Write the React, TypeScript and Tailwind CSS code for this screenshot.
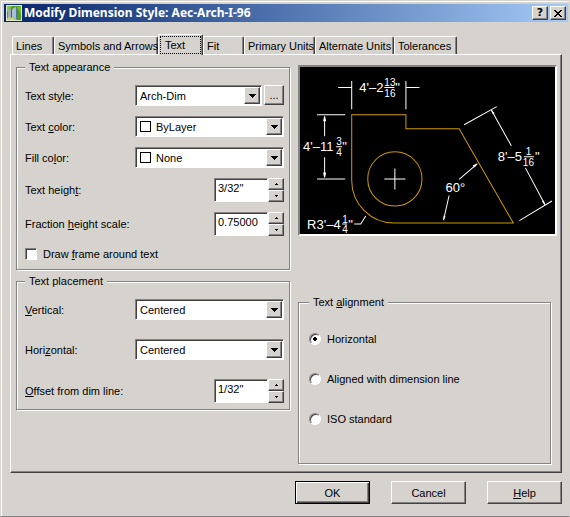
import { useState } from "react";
import type { ReactNode } from "react";

const tabs = [
  { name: "Lines", width: "w-[42px]" },
  { name: "Symbols and Arrows", width: "w-[104px]" },
  { name: "Text", width: "w-[45px]" },
  { name: "Fit", width: "w-[41px]" },
  { name: "Primary Units", width: "w-[71px]" },
  { name: "Alternate Units", width: "w-[79px]" },
  { name: "Tolerances", width: "w-[63px]" }
];

const raised = "bg-[#d6d3ce] border border-t-white border-l-white border-r-[#424142] border-b-[#424142] shadow-[inset_-1px_-1px_0_#848284]";
const sunken = "bg-white border border-t-[#848284] border-l-[#848284] border-r-white border-b-white shadow-[inset_1px_1px_0_#424142]";

const Group = ({ title, className, children }: { title: ReactNode; className: string; children: ReactNode }) => (
  <fieldset className={`border border-[#848284] shadow-[1px_1px_0_#fff,inset_1px_1px_0_#fff] ${className}`}>
    <legend className="bg-[#d6d3ce] px-1 leading-4">{title}</legend>
    {children}
  </fieldset>
);

const Row = ({ id, label, children }: { id: string; label: ReactNode; children: ReactNode }) => (
  <div className="flex items-center justify-between">
    <label htmlFor={id}>{label}</label>
    {children}
  </div>
);

const Combo = ({ id, options, swatch, className }: { id: string; options: string[]; swatch?: boolean; className: string }) => (
  <div className={`relative h-[21px] ${className}`}>
    <select id={id} className={`size-full appearance-none rounded-none outline-none pr-5 ${swatch ? "pl-5" : "pl-1"} ${sunken}`}>
      {options.map((option) => (
        <option key={option}>{option}</option>
      ))}
    </select>
    {swatch && <span className="pointer-events-none absolute left-[5px] top-[5px] size-[11px] border border-black bg-white" />}
    <span className={`pointer-events-none absolute right-[2px] top-[2px] flex h-[17px] w-4 items-center justify-center ${raised}`}>
      <svg width="7" height="4" viewBox="0 0 7 4" shapeRendering="crispEdges">
        <path d="M0 0h7v1h-1v1h-1v1h-1v1h-1v-1h-1v-1h-1v-1h-1z" />
      </svg>
    </span>
  </div>
);

const Spinner = ({ id, initial }: { id: string; initial: string }) => (
  <div className="flex h-6">
    <input id={id} type="text" defaultValue={initial} className={`w-[54px] px-[3px] pb-1 outline-none ${sunken}`} />
    <div className="flex w-4 flex-col">
      <button type="button" aria-label="Increase" className={`flex flex-1 items-center justify-center ${raised}`}>
        <svg width="3" height="2" viewBox="0 0 3 2" shapeRendering="crispEdges"><path d="M1 0h1v1h1v1h-3v-1h1z" /></svg>
      </button>
      <button type="button" aria-label="Decrease" className={`flex flex-1 items-center justify-center ${raised}`}>
        <svg width="3" height="2" viewBox="0 0 3 2" shapeRendering="crispEdges"><path d="M0 0h3v1h-1v1h-1v-1h-1z" /></svg>
      </button>
    </div>
  </div>
);

const AppIcon = () => (
  <svg width="16" height="16" viewBox="0 0 16 16">
    <rect width="16" height="16" fill="#dfe8d4" />
    <rect x="1" y="1" width="14" height="14" fill="#4fa01c" />
    <path d="M1 1h5l-5 6z" fill="#8cc63c" />
    <path d="M11 2l4-1v8z" fill="#79bd2c" />
    <path d="M1 14l2-4 8 5h-10z" fill="#c8d27a" />
    <path d="M2 5l3-2v10l-3-1z" fill="#9fb0a8" />
    <path d="M6 4l4-2v12l-4-2z" fill="#a8c0d6" />
    <path d="M10 2l2 3v9l-2 0z" fill="#5a7896" />
    <path d="M5 3l1 1v8l-1 1z" fill="#4a6458" />
  </svg>
);

const Preview = () => (
  <svg viewBox="0 0 254 166" className="block h-auto w-full bg-black" role="img" aria-label="Dimension preview">
    <g fill="none" stroke="#ce9a00">
      <path d="M51.5 113.5v-66h54v14h53l54 94h-118.5a42.5 42.5 0 0 1 -42.5 -42.5z" />
      <circle cx="94.5" cy="111.5" r="27" />
    </g>
    <g fill="none" stroke="#fff">
      <path d="M84 111.5h21M94.5 101v21" />
      <path d="M51.5 14v28M105.5 14v28M38 20.5h13M106 20.5h13" />
      <path d="M17 47.5h28M17 111.5h28M24.5 51v18M24.5 90v18" />
      <path d="M163.5 57.5l32.5-18M190.5 42.5l20 36M224.5 100.5l19.5 36.5M218.5 153l32.5-19.5" />
      <path d="M158.5 112l18-15.5M148.5 128l-5.5 24.5M54 156.5h6.5l5-8" />
      <path d="M84 20.5h10M36 79.5h6M223 89.5h10M42 156.5h5" />
    </g>
    <g fill="#fff">
      <path d="M24 49h1l1 5h-3zM24 110h1l1-5h-3zM190 42l4 4-2 1zM244 138l-1-5-2 1zM177 96l-5 2 2 2zM143 153l0-5 2 1z" />
      <g className="font-['Liberation_Sans'] text-[13px]">
        <text x="59" y="25">4'–2</text>
        <text x="3" y="84">4'–11</text>
        <text x="197" y="94">8'–5</text>
        <text x="145" y="125">60°</text>
        <text x="7" y="161">R3'–4</text>
        <text x="95" y="25">"</text>
        <text x="42" y="84">"</text>
        <text x="234" y="94">"</text>
        <text x="48" y="161">"</text>
      </g>
      <g className="font-['Liberation_Sans'] text-[10px]">
        <text x="84" y="19">13</text>
        <text x="84" y="30">16</text>
        <text x="36" y="78">3</text>
        <text x="36" y="89">4</text>
        <text x="225" y="88">1</text>
        <text x="222" y="99">16</text>
        <text x="42" y="155">1</text>
        <text x="42" y="165">4</text>
      </g>
    </g>
  </svg>
);

const alignments = ["Horizontal", "Aligned with dimension line", "ISO standard"];

export default function App() {
  const [activeTab, setActiveTab] = useState("Text");
  const [alignment, setAlignment] = useState("Horizontal");

  return (
    <main className="flex min-h-screen flex-col border border-[#d6d3ce] border-b-[#848284] bg-[#d6d3ce] font-['Liberation_Sans',sans-serif] text-[11px] leading-4 text-black shadow-[inset_1px_1px_0_#fff]">
      <header className="ml-[3px] mr-px mt-[3px] flex h-[18px] items-center gap-0.5 bg-linear-to-r from-[#08246b] to-[#a5cbf7] px-0.5">
        <AppIcon />
        <h1 className="flex-1 font-['Noto_Sans',sans-serif] text-[12px] font-bold text-white">Modify Dimension Style: Aec-Arch-I-96</h1>
        <button type="button" aria-label="Help" className={`flex h-[14px] w-4 items-center justify-center font-['DejaVu_Sans'] text-[11px] font-bold ${raised}`}>?</button>
        <button type="button" aria-label="Close" className={`flex h-[14px] w-4 items-center justify-center ${raised}`}>
          <svg width="8" height="7" viewBox="0 0 8 7" shapeRendering="crispEdges">
            <path d="M0 0h2v1h1v1h2v-1h1v-1h2v1h-1v1h-1v1h-1v1h1v1h1v1h1v1h-2v-1h-1v-1h-2v1h-1v1h-2v-1h1v-1h1v-1h1v-1h-1v-1h-1v-1h-1z" />
          </svg>
        </button>
      </header>

      <div role="tablist" className="mx-[11px] mt-3 flex items-end">
        {tabs.map((tab) => (
          <button
            key={tab.name}
            type="button"
            role="tab"
            aria-selected={activeTab === tab.name}
            onClick={() => setActiveTab(tab.name)}
            className={`shrink-0 whitespace-nowrap rounded-t-[2px] border border-b-0 border-t-white border-l-white border-r-[#424142] text-left shadow-[inset_-1px_0_0_#848284] ${tab.width} ${
              activeTab === tab.name ? "relative -mb-px h-[21px] bg-[#d6d3ce] p-px" : "h-[18px] px-[3px]"
            }`}
          >
            {activeTab === tab.name ? (
              <span className="block border border-dotted border-black pl-1 leading-4">{tab.name}</span>
            ) : (
              tab.name
            )}
          </button>
        ))}
      </div>

      <section className="ml-[9px] mr-[7px] grid flex-1 grid-cols-[274fr_259fr] gap-2 border border-t-white border-l-white border-r-[#424142] border-b-[#424142] pt-1 pr-1 pb-2 pl-[5px] shadow-[inset_-1px_-1px_0_#848284]">
        <div className="flex flex-col gap-[3px]">
          <Group title="Text appearance" className="pt-[10px] pr-[5px] pb-[7px] pl-2">
            <div className="flex flex-col gap-[10px]">
              <Row id="text-style" label={<>Text st<u>y</u>le:</>}>
                <div className="flex w-[149px] gap-0.5">
                  <Combo id="text-style" options={["Arch-Dim", "Standard"]} className="flex-1" />
                  <button type="button" aria-label="Browse text styles" className={`h-5 w-5 ${raised}`}>...</button>
                </div>
              </Row>
              <Row id="text-color" label={<>Text <u>c</u>olor:</>}>
                <Combo id="text-color" options={["ByLayer", "ByBlock"]} swatch className="w-[149px]" />
              </Row>
              <Row id="fill-color" label={<>Fill co<u>l</u>or:</>}>
                <Combo id="fill-color" options={["None", "Background"]} swatch className="w-[149px]" />
              </Row>
              <Row id="text-height" label={<>Text heigh<u>t</u>:</>}>
                <Spinner id="text-height" initial={'3/32"'} />
              </Row>
              <Row id="fraction-scale" label={<>Fraction <u>h</u>eight scale:</>}>
                <Spinner id="fraction-scale" initial="0.75000" />
              </Row>
              <label className="flex items-center gap-1.5">
                <input type="checkbox" className={`size-3 appearance-none checked:bg-black ${sunken}`} />
                <span>Draw <u>f</u>rame around text</span>
              </label>
            </div>
          </Group>

          <Group title="Text placement" className="pt-[10px] pr-[5px] pb-[6px] pl-2">
            <div className="flex flex-col gap-[19px]">
              <Row id="vertical" label={<><u>V</u>ertical:</>}>
                <Combo id="vertical" options={["Centered", "Above", "Outside", "JIS"]} className="w-[149px]" />
              </Row>
              <Row id="horizontal" label={<>Hori<u>z</u>ontal:</>}>
                <Combo id="horizontal" options={["Centered", "At Ext Line 1", "At Ext Line 2"]} className="w-[149px]" />
              </Row>
              <Row id="offset" label={<><u>O</u>ffset from dim line:</>}>
                <Spinner id="offset" initial={'1/32"'} />
              </Row>
            </div>
          </Group>
        </div>

        <div className="flex flex-col justify-between pt-[6px]">
          <div className="border-2 border-t-[#848284] border-l-[#848284] border-r-white border-b-white">
            <Preview />
          </div>
          <Group title={<>Text <u>a</u>lignment</>} className="mr-[6px] pl-[10px] pt-[21px] pb-9">
            <div className="flex flex-col gap-6">
              {alignments.map((name) => (
                <label key={name} className="flex items-center gap-1.5">
                  <input
                    type="radio"
                    name="alignment"
                    checked={alignment === name}
                    onChange={() => setAlignment(name)}
                    className="size-3 appearance-none rounded-full border border-t-[#848284] border-l-[#848284] border-r-white border-b-white bg-white shadow-[inset_1px_1px_0_#424142] checked:bg-[radial-gradient(circle,#000_2px,#fff_2px)]"
                  />
                  {name}
                </label>
              ))}
            </div>
          </Group>
        </div>
      </section>

      <footer className="mr-[7px] mt-2 mb-3 flex justify-end gap-[21px]">
        <button type="button" className="h-[23px] w-[75px] border border-black bg-[#d6d3ce] shadow-[inset_1px_1px_0_#fff,inset_-1px_-1px_0_#424142,inset_-2px_-2px_0_#848284]">OK</button>
        <button type="button" className={`h-[23px] w-[75px] ${raised}`}>Cancel</button>
        <button type="button" className={`h-[23px] w-[75px] ${raised}`}><u>H</u>elp</button>
      </footer>
    </main>
  );
}
